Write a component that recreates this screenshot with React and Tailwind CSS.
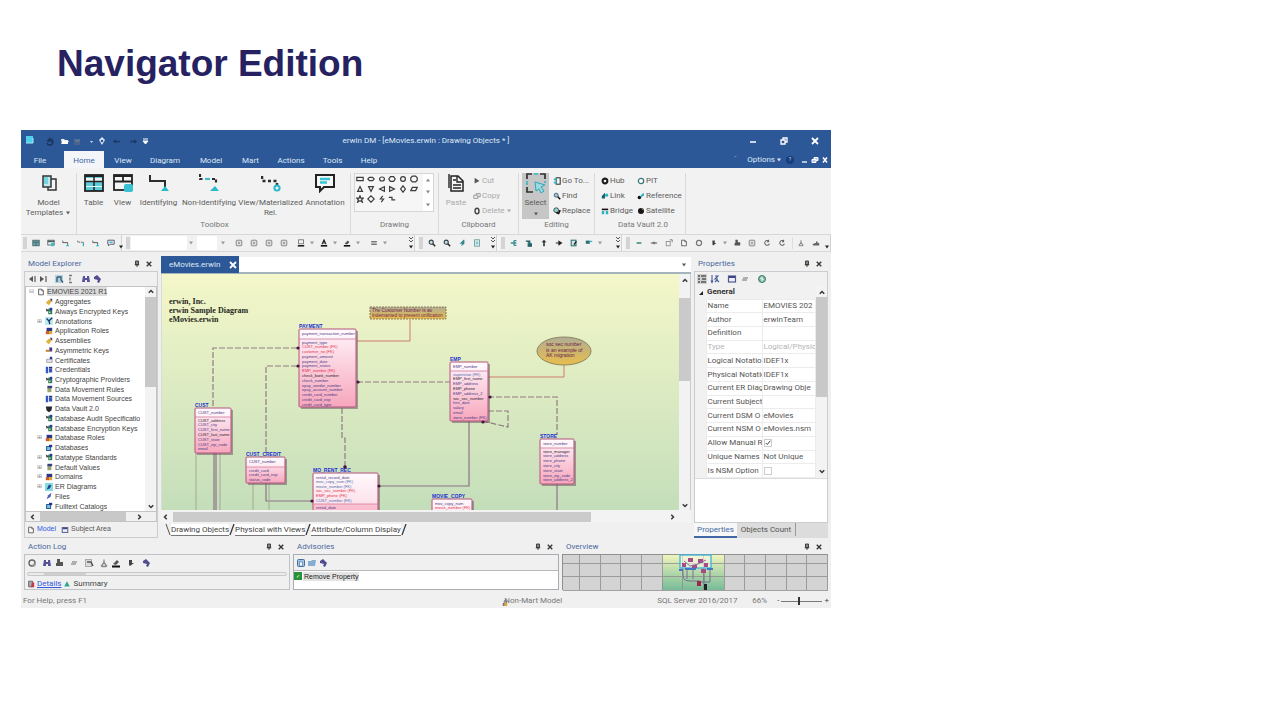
import { useState } from "react";

const DARK = "#3d3f45";
const TEAL = "#2bb3c0";

// small 10x10 toolbar glyphs
const glyphs = {
    table: <><rect x="1" y="1.5" width="8" height="7" fill="#5fa8ae" stroke="#4a5a60" /><path d="M1 4h8M5 4v4.5" stroke="#4a5a60" /></>,
    view: <><rect x="1" y="1.5" width="8" height="6" fill="#e8f4f4" stroke="#4a5a60" /><path d="M1 3h8" stroke="#4a5a60" strokeWidth="2" /><rect x="5" y="5" width="4" height="4" fill="#4bb6bd" /></>,
    rel: <><path d="M1 2v2.500h6V7" stroke={DARK} fill="none" /><path d="M5 9l2-3 2 3z" fill={TEAL} /></>,
    relDash: <><path d="M1 2v2h7v2" stroke={DARK} fill="none" strokeDasharray="2 1" /><path d="M8 5v4" stroke={TEAL} strokeWidth="1.500" /></>,
    note: <><path d="M1 1.500h8v5H4l-2 2v-2H1z" fill="#eef" stroke={DARK} /><path d="M3 4h4" stroke={TEAL} strokeWidth="1.500" /></>,
    box: <><rect x="1.500" y="1.500" width="7" height="7" rx="1" fill="#ddd" stroke="#777" /><rect x="4" y="4" width="2" height="2" fill="#888" /></>,
    boxLine: <><rect x="2" y="1" width="6" height="5" fill="none" stroke="#666" /><path d="M1 8.500h8" stroke="#222" strokeWidth="2" /></>,
    fontColor: <><path d="M2.500 6.500L5 1l2.500 5.500M3.500 5h3" stroke="#222" strokeWidth="1.300" fill="none" /><path d="M1 8.500h8" stroke="#111" strokeWidth="2" /></>,
    fill: <><path d="M2 6l4-4 2 2-3 3z" fill="#555" /><path d="M1 8.500h8" stroke="#111" strokeWidth="2" /></>,
    lines: <path d="M1.500 3.500h7M1.500 6.500h7" stroke="#777" strokeWidth="2" />,
    search: <><circle cx="4" cy="4" r="2.600" fill="#bfe3e3" stroke={DARK} strokeWidth="1.300" /><path d="M6 6l3 3" stroke="#222" strokeWidth="1.800" /></>,
    flag: <path d="M7 1L2 6h3l-1 3 4-3V1z" fill="#35878c" />,
    sheet: <><rect x="2" y="1" width="6" height="8" fill="#dcefee" stroke="#67908f" /><path d="M3.500 4h3M3.500 6h3" stroke={TEAL} /></>,
    tree: <path d="M1 5h4M5 2v6M5 2h3M5 5h3M5 8h3" stroke="#3b8d92" strokeWidth="1.600" fill="none" />,
    outline: <path d="M1 2h2M1 5h2M1 8h2M4 2h5M5 5h4M4 8h5" stroke="#555" strokeWidth="1.400" />,
    hook: <path d="M1 2.500h5V6M4 6h4v3H4z" stroke="#27636a" strokeWidth="1.500" fill="#27636a" />,
    up: <path d="M5 1l3 3H6v5H4V4H2z" fill="#333" />,
    arrow: <path d="M1 5h6M5 3l3 2-3 2z" stroke="#222" strokeWidth="1.500" />,
    export: <><rect x="1.500" y="1.500" width="6" height="7" fill="#cfe8e8" stroke="#2f6f70" strokeWidth="1.300" /><path d="M5 7l3-4" stroke="#111" strokeWidth="1.500" /></>,
    flow: <><rect x="1" y="2" width="5" height="4" fill="#2b7077" /><path d="M6 3h3" stroke={TEAL} strokeWidth="1.500" /></>,
    dash: <path d="M2 5h6" stroke="#448a80" strokeWidth="2" />,
    link: <><path d="M1 5h8" stroke="#777" strokeWidth="1.500" /><rect x="3.500" y="3.500" width="3" height="3" fill="#777" /></>,
    corner: <><rect x="1.500" y="3" width="5" height="5.500" fill="none" stroke="#888" /><path d="M6 1h3v3" stroke="#666" fill="none" /></>,
    page: <path d="M2 1.500h4l2 2v5H2zM6 1.500v2h2" stroke="#666" fill="#f7f7f7" strokeWidth="1.200" />,
    ring: <circle cx="5" cy="5" r="3.200" stroke="#777" strokeWidth="1.500" fill="none" />,
    square: <path d="M3 2h3v3h2L4 8 3 7z" fill="#444" />,
    stamp: <path d="M3 1h3v3h3v4H2V5h1z" fill="#555" />,
    rotate: <path d="M7 2.500A3 3 0 108 6M7 1v2.500H5" stroke="#666" strokeWidth="1.300" fill="none" />,
    person: <path d="M5 1.500v3M5 4.500L2 8.500M5 4.500l3 4M3 8.500h4" stroke="#888" strokeWidth="1.300" fill="none" />,
    chart: <path d="M1 8V6h2V5h2V3h2v2h2v3z" fill="#666" />,
    sortL: <><path d="M6 2L2 5l4 3z" fill="#555" /><path d="M8 2v6" stroke="#777" strokeWidth="1.500" /></>,
    sortR: <><path d="M2 2l4 3-4 3z" fill="#555" /><path d="M8 2v6" stroke="#777" strokeWidth="1.500" /></>,
    filter: <><rect x="1" y="1" width="8" height="8" fill="#b5cfdd" /><path d="M3 3h4v3l2 2.500M3 3v5" stroke="#34607e" strokeWidth="1.400" fill="none" /></>,
    filterGray: <><rect x="1.500" y="1.500" width="6" height="7" fill="#ddd" stroke="#aaa" /><path d="M3 4h4l2 4" stroke="#555" strokeWidth="1.500" fill="none" /></>,
    list: <path d="M4 1.500h3M5 3.500v3M4 8.500h3" stroke="#777" strokeWidth="1.400" />,
    bino: <path d="M2 2h2v2h2V2h2l1 6H6V6H4v2H1z" fill="#55529a" />,
    gem: <path d="M2 3l3-2 4 4-2 4-2-1 1-2-4-1z" fill="#504c8d" />,
    globe: <><circle cx="5" cy="5" r="3.500" fill="#7fb8a2" stroke="#3f7a66" /><path d="M5 2.500v5M3 4l4 2" stroke="#e9f6f0" /></>,
    gear: <><circle cx="5" cy="5" r="3" fill="#eee" stroke="#666" strokeWidth="1.400" /><circle cx="7" cy="7" r="1.500" fill="#999" /></>,
    mini: <><rect x="1.500" y="2" width="7" height="6" fill="#eceffa" stroke="#53588c" strokeWidth="1.200" /><path d="M2 3h6" stroke="#3f4586" strokeWidth="2" /></>,
    minus: <path d="M2 6h5M3 4h5" stroke="#999" strokeWidth="1.400" />,
    az: <path d="M2 1v7M1 6.500l1 2 1-2M5 2h3L5 5h3M5 8l2-2 2 2" stroke="#445a9c" strokeWidth="1.100" fill="none" />,
    disk: <><rect x="1.500" y="1.500" width="7" height="7" rx="1" fill="#9ec4e6" stroke="#456e9c" /><rect x="3.500" y="4" width="3" height="4" fill="#fff" stroke="#456e9c" strokeWidth=".6" /></>,
    folder: <path d="M1 3h3l1-1h4L8 8H1z" fill="#86aed0" />,
    tri: <path d="M5 1.500L8.500 8h-7z" fill="#2aa88f" />,
    book: <><path d="M2 1.500h5v7H2z" fill="#a9a9b8" stroke="#555" /><path d="M6 3h3v6H5z" fill="#c8384a" /></>,
};

function Glyph({ name, className = "size-2.5" }) {
    return <svg viewBox="0 0 10 10" className={"shrink-0 " + className} aria-hidden="true">{glyphs[name]}</svg>;
}

function Caret({ className = "" }) {
    return <svg viewBox="0 0 6 4" className={"h-1 w-1.5 shrink-0 " + className} aria-hidden="true"><path d="M1 .5h4L3 3.500z" fill="currentColor" /></svg>;
}

function Chevron({ dir }) {
    const d = { up: "M1 5l3-3 3 3", down: "M1 3l3 3 3-3", left: "M5 1L2 4l3 3", right: "M3 1l3 3-3 3" }[dir];
    return <svg viewBox="0 0 8 8" className="size-1.5 shrink-0" aria-hidden="true"><path d={d} fill="none" stroke="#3a3a3a" strokeWidth="2" /></svg>;
}

function CloseIcon({ className = "size-1.5" }) {
    return <svg viewBox="0 0 8 8" className={className} aria-hidden="true"><path d="M1 1l6 6M7 1L1 7" stroke="currentColor" strokeWidth="1.800" /></svg>;
}

function PanelTitle({ children }) {
    return (
        <div className="flex h-[14px] items-center pl-1 pr-1.5 text-[#4a689e]">
            <h2 className="flex-1 text-[8px]">{children}</h2>
            <button type="button" aria-label="Pin" className="mr-1.5 text-[#333]">
                <svg viewBox="0 0 8 10" className="h-2 w-1.5"><path d="M2 1h4v5H2zM1 6h6M4 6v3" fill="#888" stroke="currentColor" strokeWidth="1.200" /></svg>
            </button>
            <button type="button" aria-label="Close panel" className="text-[#333]"><CloseIcon /></button>
        </div>
    );
}

/* ---------- title bar + menu ---------- */

const menus = [
    ["File", "w-[38px]"], ["Home", "w-[40px]"], ["View", "w-[38px]"], ["Diagram", "w-[46px]"], ["Model", "w-[46px]"],
    ["Mart", "w-[33px]"], ["Actions", "w-[48px]"], ["Tools", "w-[35px]"], ["Help", "w-[38px]"],
];

function TitleBar() {
    const [active, setActive] = useState("Home");
    return (
        <header className="bg-[#2c5898] text-[#dfe8f5]">
            <div className="grid h-[21px] grid-cols-[1fr_auto_1fr] items-center">
                <svg viewBox="0 0 130 12" className="ml-1 h-3 w-[130px]" aria-hidden="true">
                    <rect x="1" y="1" width="7" height="7" fill="#4fd0ea" /><path d="M1 8h7V3" stroke="#a7ecf7" fill="none" />
                    <path d="M25 4a3 3 0 11-3 4M25 3l-2 3h4" stroke="#17365f" strokeWidth="1.500" fill="none" />
                    <path d="M36 4h3l1 1h3v4h-6z" fill="#f3f3ee" /><path d="M36 9l2-3h6l-2 3z" fill="#fff" />
                    <rect x="49" y="4" width="6" height="6" fill="#4c658e" /><path d="M51 4v2h3V4" stroke="#6d83a5" fill="none" />
                    <path d="M65 6h3l-1.500 2z" fill="#cfdcf0" />
                    <path d="M77 2l3 3-3 5-3-5z" fill="#dce6f4" /><circle cx="77" cy="6" r="1.300" fill="#2c5898" />
                    <path d="M89 6.500h6M91 5l-2 1.500 2 1.500M105 6.500h6M109 5l2 1.500-2 1.500" stroke="#1b3a68" strokeWidth="1.500" fill="none" />
                    <path d="M118 4h5M118 6h5l-2.500 3z" stroke="#fff" fill="#fff" />
                </svg>
                <h1 className="text-[8px] whitespace-nowrap">erwin DM - [eMovies.erwin : Drawing Objects * ]</h1>
                <div className="flex items-center justify-end gap-[23px] pr-3 text-white">
                    <button type="button" aria-label="Minimize"><svg viewBox="0 0 8 8" className="size-2"><path d="M1 5h6" stroke="currentColor" strokeWidth="1.500" /></svg></button>
                    <button type="button" aria-label="Restore"><svg viewBox="0 0 8 8" className="size-2"><path d="M1 3h4v4H1zM3 3V1h4v4H5" fill="none" stroke="currentColor" strokeWidth="1.300" /></svg></button>
                    <button type="button" aria-label="Close"><CloseIcon className="size-2" /></button>
                </div>
            </div>
            <nav className="flex h-[17px] items-stretch text-[8px]">
                {menus.map(([name, width]) => (
                    <button
                        key={name}
                        type="button"
                        onClick={() => setActive(name)}
                        className={`pt-0.5 ${width} ${name === "Home" ? "ml-[5px]" : ""} ${active === name ? "bg-[#f3f5f8] text-[#3f66a3]" : ""}`}
                    >
                        {name}
                    </button>
                ))}
                <div className="ml-auto flex items-center gap-1 pr-[3px]">
                    <span className="mr-1.5 text-[#8fabd4]">ˆ</span>
                    <button type="button" className="flex items-center">Options <Caret className="ml-px" /></button>
                    <span className="flex size-2 items-center justify-center rounded-full bg-[#163f7c] text-[5px]">?</span>
                    <svg viewBox="0 0 30 8" className="h-2 w-[30px]" aria-hidden="true">
                        <path d="M4 6h5" stroke="#fff" strokeWidth="1.300" /><path d="M14 3.500h4v3h-4zM16 3V1.500h4v3h-2" fill="#b9cbe6" stroke="#fff" />
                        <path d="M25 1.500l4 5M29 1.500l-4 5" stroke="#fff" strokeWidth="1.500" />
                    </svg>
                </div>
            </nav>
        </header>
    );
}

/* ---------- ribbon ---------- */

const bigIcons = {
    templates: <><rect x="9" y="6" width="8" height="11" fill="#f4f4f4" stroke="#333" strokeWidth="1.500" /><rect x="4" y="3" width="8" height="11" fill="#bfe9ee" stroke="#333" strokeWidth="1.500" /><rect x="5" y="4" width="4" height="7" fill="#74d4df" /></>,
    table: <><rect x="1" y="2" width="18" height="16" fill="#5fcbd8" stroke="#222" strokeWidth="1.800" /><path d="M2 6.500h16" stroke="#f2f2f2" strokeWidth="3" /><path d="M1 3h18" stroke="#222" strokeWidth="2" /><path d="M10 3v15M1 8.500h18" stroke="#222" strokeWidth="1.500" /><path d="M2 13.500h16" stroke="#e4fbfd" /></>,
    view: <><rect x="1" y="2" width="18" height="15" fill="#f5f5f5" stroke="#222" strokeWidth="1.800" /><path d="M1 3h18M10 3v6M1 8.500h18" stroke="#222" strokeWidth="1.800" /><rect x="11" y="11" width="9" height="8" rx="2" fill="#37c1d2" /></>,
    identifying: <><path d="M1 2v6h15v6" fill="none" stroke="#2d2d2d" strokeWidth="2" /><path d="M12 18l4-5 4 5z" fill="#28b9cb" /></>,
    nonident: <><path d="M1 1v5h3M13 6h4v5" fill="none" stroke="#2d2d2d" strokeWidth="2.200" strokeDasharray="3 1.500" /><path d="M6 6h5" stroke="#41bfcc" strokeWidth="2.200" /><path d="M11 18l5-5 4 5z" fill="#28b9cb" /></>,
    material: <><path d="M1 3v5h15v4" fill="none" stroke="#2d2d2d" strokeWidth="2.500" strokeDasharray="3 2.500" /><circle cx="16" cy="15" r="2.600" fill="none" stroke="#28b9cb" strokeWidth="2" /></>,
    annotation: <><path d="M1 2h18v12H9l-4 4v-4H1z" fill="#f8f8f8" stroke="#222" strokeWidth="2" /><path d="M5 6h10M5 9.500h7" stroke="#3bc4d3" strokeWidth="2.500" /></>,
    paste: <><path d="M5 3h7l5 5v10H5z" fill="#f5f5f5" stroke="#222" strokeWidth="1.500" /><path d="M3 1v14M11 3v6h6M7 12h8M7 15h8M7 7h3" stroke="#222" strokeWidth="1.400" fill="none" /></>,
    select: <><path d="M1 6V1h5M14 1h5v5M1 14v5h6" fill="none" stroke="#333" strokeWidth="1.700" /><path d="M8 1h4M1 8v4M19 8v2" stroke="#38b8c5" strokeWidth="1.700" /><path d="M9 9l10 3-4 2 3 4-3 2-2-4-3 2z" fill="#9fd8de" stroke="#29aab9" /></>,
};

function BigIcon({ name, className = "size-5" }) {
    return <svg viewBox="0 0 20 20" className={className} aria-hidden="true">{bigIcons[name]}</svg>;
}

function RibbonButton({ icon, label, width, children }) {
    return (
        <button type="button" className={`flex flex-col items-center ${width}`}>
            <BigIcon name={icon} />
            <span className="mt-[5px] text-center leading-[10px] whitespace-nowrap">{label}{children}</span>
        </button>
    );
}

function RibbonGroup({ label, width, children }) {
    return (
        <section className={`flex shrink-0 flex-col border-r border-[#d9d9d9] ${width}`}>
            <div className="flex h-[46px] items-start">{children}</div>
            <h3 className="text-center leading-[12px] text-[#777]">{label}</h3>
        </section>
    );
}

function SmallCommand({ icon, children }) {
    return (
        <button type="button" className="flex h-[15px] items-center gap-px whitespace-nowrap">
            <svg viewBox="0 0 10 10" className="size-2 shrink-0" aria-hidden="true">{icon}</svg>
            {children}
        </button>
    );
}

const shapes = [
    "M1 3h8v4H1z", "M3 3h4l2 2-2 2H3L1 5z", "M2 5a3 2.500 0 016 0 3 2.500 0 01-6 0", "M3 2h4l2 3-2 3H3L1 5z", "M2 5a3 3 0 016 0 3 3 0 01-6 0", "M3 1.500h4l2 2v3l-2 2H3l-2-2v-3z",
    "M5 2l3 6H2z", "M2 2h6L5 8z", "M8 2v6L2 5z", "M2 2l6 3-6 3z", "M5 1l3 4-3 4-3-4z", "M3 3h6L7 7H1z",
    "M5 1l1 3h3L7 6l1 3-3-2-3 2 1-3-2-2h3z", "M5 1l2 2 2 2-2 2-2 2-2-2-2-2 2-2z", "M6 1L3 5h4L4 9", "M1 3h4v3h4",
];

function Ribbon() {
    return (
        <div className="flex h-[66px] overflow-hidden bg-[#f2f2f2] pt-[5px] text-[8px] text-[#5c5c5c]">
            <RibbonGroup width="w-[56px]">
                <RibbonButton icon="templates" width="w-full" label={<>Model<br />Templates </>}><Caret className="inline-block" /></RibbonButton>
            </RibbonGroup>
            <RibbonGroup label="Toolbox" width="w-[274px] pl-0.5">
                <RibbonButton icon="table" label="Table" width="w-[29px]" />
                <RibbonButton icon="view" label="View" width="w-[29px]" />
                <RibbonButton icon="identifying" label="Identifying" width="w-[43px]" />
                <RibbonButton icon="nonident" label="Non-Identifying" width="w-[58px]" />
                <RibbonButton icon="material" label={<>View/Materialized<br />Rel.</>} width="w-[65px]" />
                <RibbonButton icon="annotation" label="Annotation" width="w-[44px]" />
            </RibbonGroup>
            <RibbonGroup label="Drawing" width="w-[88px]">
                <div className="ml-[3px] flex h-[39px] w-[80px] border border-[#d5d5d5] bg-[#f6f6f6]">
                    <div className="grid w-[68px] grid-cols-6 content-start gap-y-0.5 pr-1 pt-px">
                        {shapes.map((d) => (
                            <svg key={d} viewBox="0 0 10 10" className="mx-auto size-2" aria-hidden="true"><path d={d} fill="none" stroke="#3c3c3c" strokeWidth="1.500" /></svg>
                        ))}
                    </div>
                    <div className="flex flex-1 flex-col items-center justify-around bg-white text-[#888]">
                        <Caret className="rotate-180" /><Caret /><Caret />
                    </div>
                </div>
            </RibbonGroup>
            <RibbonGroup label="Clipboard" width="w-[80px]">
                <button type="button" className="flex w-[34px] flex-col items-center text-[#aaa]"><BigIcon name="paste" /><span className="mt-[5px] leading-[10px]">Paste</span></button>
                <div className="text-[#aaa]">
                    <SmallCommand icon={<path d="M2 1l6 4-6 3z" fill="#555" />}>Cut</SmallCommand>
                    <SmallCommand icon={<path d="M1 4h5v4H1zM4 4V2h5v4H6" fill="none" stroke="#888" />}>Copy</SmallCommand>
                    <SmallCommand icon={<ellipse cx="5" cy="5" rx="2.500" ry="3.500" fill="none" stroke="#444" strokeWidth="1.800" />}>Delete <Caret /></SmallCommand>
                </div>
            </RibbonGroup>
            <RibbonGroup label="Editing" width="w-[76px]">
                <button type="button" className="mr-1 ml-[3px] flex h-[46px] w-[27px] flex-col items-center bg-[#c6c6c6]">
                    <BigIcon name="select" /><span className="mt-[5px] leading-[10px]">Select</span><Caret className="mt-1" />
                </button>
                <div>
                    <SmallCommand icon={<><rect x="4" y="1" width="5" height="8" fill="none" stroke="#333" strokeWidth="1.300" /><path d="M1 3h4M1 7h4" stroke={TEAL} strokeWidth="2" /></>}>Go To...</SmallCommand>
                    <SmallCommand icon={<><circle cx="4" cy="4" r="2.500" fill="#8fcfd5" stroke="#446" /><path d="M6 6l3 3" stroke="#111" strokeWidth="2" /></>}>Find</SmallCommand>
                    <SmallCommand icon={<><circle cx="4" cy="4" r="3" fill="#8fd5d8" stroke="#333" /><path d="M4 7l3 1 2-4" stroke="#111" strokeWidth="2" fill="none" /></>}>Replace</SmallCommand>
                </div>
            </RibbonGroup>
            <RibbonGroup label="Data Vault 2.0" width="w-[91px] pl-1.5">
                <div className="w-[36px]">
                    <SmallCommand icon={<circle cx="5" cy="5" r="3" fill="none" stroke="#1a1a1a" strokeWidth="2.600" />}>Hub</SmallCommand>
                    <SmallCommand icon={<><path d="M1 8V5l4-4v7z" fill="#1f5f68" /><circle cx="7" cy="4" r="2" fill={TEAL} /></>}>Link</SmallCommand>
                    <SmallCommand icon={<><path d="M1 2h8v2H1z" fill="#111" /><path d="M1 5h3v4H1zM6 5h3v4H6z" fill={TEAL} /></>}>Bridge</SmallCommand>
                </div>
                <div>
                    <SmallCommand icon={<circle cx="5" cy="5" r="3.300" fill="#fff" stroke="#3c7a78" strokeWidth="1.600" />}>PIT</SmallCommand>
                    <SmallCommand icon={<><circle cx="3" cy="7" r="2.200" fill="#111" /><path d="M4 5l4-4 1 3-4 3z" fill={TEAL} /></>}>Reference</SmallCommand>
                    <SmallCommand icon={<><circle cx="5" cy="5" r="3.800" fill="#161616" /><path d="M6 2l2 2" stroke="#bbb" /></>}>Satellite</SmallCommand>
                </div>
            </RibbonGroup>
        </div>
    );
}

/* ---------- toolbar strip ---------- */

function Tool({ name }) {
    return <button type="button" aria-label={name} className="flex w-[15px] shrink-0 justify-center"><Glyph name={name} className="size-2" /></button>;
}

function Drop() {
    return <span className="flex w-2 shrink-0 justify-center text-[#999]"><Caret /></span>;
}

function Strip({ width, chevron, children }) {
    return (
        <div className={`flex items-center border-r border-[#d2d2d2] bg-[#f1f1f1] ${width}`}>
            <span className="mx-px h-3 w-1 shrink-0 bg-[#d4d4d4]" />
            {children}
            <span className="ml-auto flex h-full flex-col items-center justify-end gap-0.5 pb-0.5 text-[#222]">
                {chevron && <svg viewBox="0 0 6 6" className="size-1.5" aria-hidden="true"><path d="M1 0l2 2 2-2M1 3l2 2 2-2" fill="none" stroke="#555" /></svg>}
                <Caret />
            </span>
        </div>
    );
}

function Toolbar() {
    return (
        <div className="flex h-[18px] gap-[3px] overflow-hidden border-y border-[#d8d8d8] bg-[#f5f5f5] pl-px">
            <Strip width="w-[100px]">
                {["table", "view", "rel", "relDash", "rel", "note"].map((n, i) => <Tool key={i} name={n} />)}
            </Strip>
            <Strip width="w-[290px]" chevron>
                <input aria-label="Font" className="h-3.5 w-[56px] bg-white" />
                <Drop />
                <input aria-label="Font size" className="mx-0.5 h-3.5 w-[20px] bg-white" />
                <Drop />
                <span className="w-1" />
                {[1, 2, 3, 4].map((n) => <Tool key={n} name="box" />)}
                <span className="w-0.5" />
                <Tool name="boxLine" /><Drop />
                <Tool name="fontColor" /><Drop />
                <Tool name="fill" /><Drop />
                <span className="w-1" />
                <Tool name="lines" /><Drop />
            </Strip>
            <Strip width="w-[79px]" chevron>
                {["search", "search", "flag", "sheet"].map((n, i) => <Tool key={i} name={n} />)}
            </Strip>
            <Strip width="w-[122px]" chevron>
                {["tree", "hook", "up", "arrow", "export", "flow"].map((n) => <Tool key={n} name={n} />)}
                <Drop />
            </Strip>
            <Strip width="flex-1">
                {["dash", "link", "corner", "page", "ring", "square"].map((n) => <Tool key={n} name={n} />)}
                <Drop />
                {["stamp", "box", "rotate", "rotate"].map((n, i) => <Tool key={i} name={n} />)}
                <span className="h-3 w-1 border-r border-[#ddd]" />
                <Tool name="person" /><Tool name="chart" />
            </Strip>
        </div>
    );
}

/* ---------- model explorer ---------- */

const treeIcons = {
    tag: <><path d="M1 6l4-4 4 1-4 6z" fill="#e2b13c" /><path d="M6 1h3v4z" fill="#34407e" /></>,
    key: <><path d="M4 2h5v7H4z" fill="#2f7a58" /><path d="M1 2l4 2-3 2z" fill="#333" /><path d="M6 1h3v3H6z" fill="#2738a6" /><circle cx="6" cy="6.500" r="1" fill="#d7f0e2" /></>,
    note: <><rect width="10" height="10" fill="#b9eef0" /><path d="M2 2l3 3 1 4M5 5l4-4" stroke="#26346e" strokeWidth="1.800" fill="none" /></>,
    role: <><path d="M2 1h7v4H2z" fill="#2c378a" /><path d="M1 5h4v4H1z" fill="#cf5b35" /><path d="M5 5h4v4H5z" fill="#d9a936" /></>,
    asym: <><path d="M1 6h5" stroke="#cf7d30" strokeWidth="2.500" /><path d="M5 2h4v5H6z" fill="#3a3e91" /></>,
    cert: <><path d="M2 4h7v4H2z" fill="#e1e3ee" stroke="#999" /><path d="M6 1h3v3H6z" fill="#2a3595" /></>,
    cred: <><path d="M1 1h3v8H1zM5 3h4v5H5z" fill="#3557bf" /><path d="M5 1h4v2H5z" fill="#1d2b83" /></>,
    rule: <><path d="M3 3h5v6H3z" fill="#9aa36d" /><path d="M3 1h6v3H3z" fill="#344083" /></>,
    vault: <path d="M1 2h8L8 7 5 9 2 7z" fill="#26262e" />,
    db: <><path d="M2 3h5v5H2z" fill="#7dc3e1" stroke="#245c98" strokeWidth="1.300" /><path d="M5 1h4v3H5z" fill="#23348f" /></>,
    er: <><rect width="10" height="10" fill="#83dce4" /><path d="M2 8l3-6 3 1-2 4z" fill="#224589" /></>,
    file: <path d="M2 9l2-5 4-3-1 5z" fill="#4d5eb1" />,
};

const tree = [
    ["Aggregates", "tag"], ["Always Encrypted Keys", "key"], ["Annotations", "note", true], ["Application Roles", "role"], ["Assemblies", "tag"],
    ["Asymmetric Keys", "asym"], ["Certificates", "cert"], ["Credentials", "cred"], ["Cryptographic Providers", "key"],
    ["Data Movement Rules", "rule"], ["Data Movement Sources", "cred"], ["Data Vault 2.0", "vault"], ["Database Audit Specificatio", "key"],
    ["Database Encryption Keys", "key"], ["Database Roles", "role", true], ["Databases", "db"], ["Datatype Standards", "key", true],
    ["Default Values", "rule", true], ["Domains", "role", true], ["ER Diagrams", "er", true], ["Files", "file"], ["Fulltext Catalogs", "db"],
];

function ModelExplorer() {
    return (
        <aside className="flex min-w-0 flex-col">
            <PanelTitle>Model Explorer</PanelTitle>
            <div className="flex flex-1 flex-col border border-[#c9ccd1]">
                <div className="flex h-[14px] items-center gap-px pl-0.5">
                    <Glyph name="sortL" /><Glyph name="sortR" />
                    <span className="w-1" />
                    <Glyph name="filter" /><Glyph name="list" />
                    <span className="w-1" />
                    <Glyph name="bino" /><Glyph name="gem" />
                </div>
                <div className="flex border border-[#c4c4c4] bg-white">
                    <ul className="grid h-[224px] min-w-0 flex-1 auto-rows-fr overflow-hidden font-['Liberation_Sans',sans-serif] text-[7px] leading-[9px] text-[#444]">
                        <li className="flex items-center gap-0.5 pl-[3px]">
                            <span className="w-1.5 text-[6px] text-[#888]">⊟</span>
                            <Glyph name="page" className="size-2" />
                            <span className="bg-[#dcdcdc] whitespace-nowrap">EMOVIES 2021 R1</span>
                        </li>
                        {tree.map(([name, icon, open]) => (
                            <li key={name} className="flex items-center gap-0.5 pl-[11px]">
                                <span className="w-1.5 text-[6px] text-[#888]">{open ? "⊞" : ""}</span>
                                <svg viewBox="0 0 10 10" className="size-2 shrink-0" aria-hidden="true">{treeIcons[icon]}</svg>
                                <span className="overflow-hidden whitespace-nowrap">{name}</span>
                            </li>
                        ))}
                    </ul>
                    <div className="flex w-[11px] flex-col items-center bg-[#f3f3f3] py-0.5">
                        <Chevron dir="up" />
                        <span className="mt-0.5 h-[90px] w-full bg-[#c8c8c8]" />
                        <span className="flex-1" />
                        <Chevron dir="down" />
                    </div>
                </div>
                <div className="flex h-[10px] items-center border-x border-b border-[#c4c4c4] bg-[#f0f0f0] px-1">
                    <Chevron dir="left" />
                    <span className="ml-1 h-full w-[86px] bg-[#c8c8c8]" />
                    <span className="flex-1" />
                    <Chevron dir="right" />
                    <span className="w-2.5" />
                </div>
                <div className="flex flex-1 items-center gap-0.5 pl-0.5 font-['Liberation_Sans',sans-serif] text-[7px] text-[#555]">
                    <Glyph name="page" className="size-2" />
                    <button type="button" className="mr-px text-[#3159e0]">Model</button>
                    <Glyph name="mini" className="ml-0.5 size-2" />
                    <button type="button">Subject Area</button>
                </div>
            </div>
        </aside>
    );
}

/* ---------- diagram canvas ---------- */

const N = "#4b3a86";
const K = "#2a1f33";
const R = "#e6304a";
const B = "#4a6fb0";

const entities = [
    {
        name: "PAYMENT", x: 137, y: 55, w: 57, h: 78, split: 10,
        keys: [["payment_transaction_number", N]],
        cols: [["payment_type", N], ["CUST_number (FK)", R], ["customer_no (FK)", R], ["payment_amount", N], ["payment_date", N], ["payment_status", N], ["EMP_number (FK)", R],
            ["check_bank_number", K], ["check_number", N], ["epay_vendor_number", N], ["epay_account_number", N], ["credit_card_number", N], ["credit_card_exp", N], ["credit_card_type", N]],
    },
    {
        name: "CUST", x: 33, y: 134, w: 36, h: 45, split: 9,
        keys: [["CUST_number", N]],
        cols: [["CUST_address", K], ["CUST_city", N], ["CUST_first_name", N], ["CUST_last_name", K], ["CUST_state", N], ["CUST_zip_code", N], ["email", N]],
    },
    {
        name: "CUST_CREDIT", x: 84, y: 183, w: 39, h: 26, split: 10,
        keys: [["CUST_number", N]],
        cols: [["credit_card", N], ["credit_card_exp", N], ["status_code", N]],
    },
    {
        name: "MO_RENT_REC", x: 151, y: 199, w: 65, h: 50, split: 31,
        keys: [["rental_record_date", N], ["mov_copy_num (FK)", B], ["movie_number (FK)", B], ["soc_sec_number (FK)", R], ["EMP_phone (FK)", R], ["CUST_number (FK)", B]],
        cols: [["rental_date", N]],
    },
    {
        name: "EMP", x: 288, y: 88, w: 38, h: 59, split: 9,
        keys: [["EMP_number", N]],
        cols: [["supervisor (FK)", B], ["EMP_first_name", K], ["EMP_address", N], ["EMP_phone", K], ["EMP_address_2", N], ["soc_sec_number", K], ["hire_date", N], ["salary", N], ["email", N], ["store_number (FK)", N]],
    },
    {
        name: "STORE", x: 378, y: 165, w: 34, h: 45, split: 9,
        keys: [["store_number", N]],
        cols: [["store_manager", K], ["store_address", N], ["store_phone", N], ["store_city", N], ["store_state", N], ["store_zip_code", N], ["store_address_2", N]],
    },
    {
        name: "MOVIE_COPY", x: 270, y: 225, w: 40, h: 30, split: 24,
        keys: [["mov_copy_num", N], ["movie_number (FK)", R]],
        cols: [],
    },
];

function Entity({ name, x, y, w, h, split, keys, cols }) {
    const pitch = Math.min(4.8, (h - split - 1) / Math.max(cols.length, 1));
    return (
        <g>
            <rect x={x + 2} y={y + 2} width={w} height={h} fill="#6d5a63" opacity=".55" />
            <rect x={x} y={y} width={w} height={h} rx="1" fill="url(#pink)" stroke="#b4557f" />
            <rect x={x + 1} y={y + 1} width={w - 2} height={split - 1} fill="#fff" opacity=".5" />
            <path d={`M${x} ${y + split}h${w}`} stroke="#d07a9c" strokeWidth=".8" />
            <text x={x} y={y - 1} fontSize="5" fontWeight="bold" fill="#1f2fd0">{name}</text>
            {keys.map(([t, c], i) => <text key={t} x={x + 3} y={y + 5.5 + i * 4.6} fill={c}>{t}</text>)}
            {cols.map(([t, c], i) => <text key={t} x={x + 3} y={y + split + 4.5 + i * pitch} fill={c}>{t}</text>)}
        </g>
    );
}

function Diagram() {
    return (
        <svg width="518" height="236" viewBox="0 0 518 236" className="block font-['Liberation_Sans',sans-serif] text-[4px]" fill="currentColor" role="img" aria-label="eMovies diagram">
            <defs>
                <linearGradient id="pink" x1="0" y1="0" x2="0" y2="1"><stop offset="0" stopColor="#fff4fa" /><stop offset="1" stopColor="#f7a6bc" /></linearGradient>
                <linearGradient id="gold" x1="0" y1="0" x2="0" y2="1"><stop offset="0" stopColor="#b0ad96" /><stop offset="1" stopColor="#e8bd4c" /></linearGradient>
            </defs>
            <g className="font-['Liberation_Serif',serif]" fontSize="8" fontWeight="bold" fill="#26281c">
                <text x="7" y="30">erwin, Inc.</text>
                <text x="7" y="39">erwin Sample Diagram</text>
                <text x="7" y="48">eMovies.erwin</text>
            </g>
            <g fill="none" stroke="#937a86" strokeWidth="1.200" strokeDasharray="6 2">
                <path d="M51 132V74h86" /><path d="M104 179V92h33" /><path d="M195 108h93" /><path d="M180 134v30h3v29" />
                <path d="M326 123h69v38" /><path d="M326 137h20v16l-26-6" />
            </g>
            <g fill="none" stroke="#8d7486" strokeWidth="1.200">
                <path d="M307 147v65h-91" /><path d="M104 209v18h47" /><path d="M52 179v57M54 179v57M395 210v26" />
                <path d="M34 179v57M58 179v57M91 209v27M107 209v27" stroke="#a3a894" strokeWidth="1" />
            </g>
            <path d="M248 46v21h-53M402 91v12h-76" fill="none" stroke="#cd7d6c" />
            {entities.map((e) => <Entity key={e.name} {...e} />)}
            <g fill="#43153f">
                <circle cx="136" cy="74" r="1.600" /><circle cx="136" cy="92" r="1.600" /><circle cx="196" cy="108" r="1.600" /><circle cx="183" cy="193" r="1.800" />
                <circle cx="328" cy="123" r="1.600" /><circle cx="321" cy="148" r="1.600" /><circle cx="217" cy="212" r="1.600" /><circle cx="150" cy="227" r="1.600" />
            </g>
            <rect x="208" y="33" width="76" height="12" fill="url(#gold)" stroke="#8a7b55" strokeDasharray="2 1" />
            <g fill="#7a2348" fontSize="4.800">
                <text x="210" y="38">The Customer Number is as</text>
                <text x="210" y="43">indemanted to prevent unification</text>
            </g>
            <ellipse cx="402" cy="77" rx="27" ry="14" fill="url(#gold)" stroke="#8c8763" />
            <g fill="#6b2148" fontSize="5">
                <text x="384" y="72">soc sec number</text>
                <text x="384" y="78">is an example of</text>
                <text x="384" y="83">AK migration</text>
            </g>
        </svg>
    );
}

function SlantTab({ children, first }) {
    return (
        <button type="button" className="flex h-[12px] items-stretch">
            {first && <svg viewBox="0 0 6 12" className="w-1.5" aria-hidden="true"><path d="M1 0l4 11" stroke="#555" /></svg>}
            <span className="border-b border-[#777] bg-white leading-[12px] whitespace-nowrap">{children}</span>
            <svg viewBox="0 0 6 12" className="w-1.5" aria-hidden="true"><path d="M5 0L1 11" stroke="#333" strokeWidth="1.200" /></svg>
        </button>
    );
}

function Workspace() {
    return (
        <main className="flex min-w-0 flex-col">
            <div className="flex h-[17px] items-center justify-between border-b-2 border-[#a5b3bd] bg-white pr-1">
                <div className="flex h-[17px] w-[78px] items-center justify-between bg-[#2c5898] pr-0.5 pl-2 text-[8px] text-[#dfe8f5]">
                    eMovies.erwin
                    <button type="button" aria-label="Close tab" className="text-white"><CloseIcon className="size-2" /></button>
                </div>
                <span className="text-[#555]"><Caret /></span>
            </div>
            <div className="flex border-l border-[#d8dbd8]">
                <div className="min-w-0 flex-1 overflow-hidden bg-linear-to-b from-[#f4f7c9] to-[#c4deba]"><Diagram /></div>
                <div className="flex w-[12px] flex-col items-center border-r border-[#ccc] bg-[#f2f2f2] pt-1 pb-0.5">
                    <Chevron dir="up" />
                    <span className="mt-[14px] h-[83px] w-full bg-[#cacaca]" />
                    <span className="flex-1" />
                    <Chevron dir="down" />
                </div>
            </div>
            <div className="flex h-[13px] items-center bg-[#f3f3f3] pr-4 pl-0.5">
                <Chevron dir="left" />
                <span className="ml-1 h-2.5 w-[418px] bg-[#cbcbcb]" />
                <span className="flex-1" />
                <Chevron dir="right" />
            </div>
            <div className="flex h-[15px] pt-px pl-1 text-[8px] text-[#444]">
                <SlantTab first>Drawing Objects</SlantTab>
                <SlantTab>Physical with Views</SlantTab>
                <SlantTab>Attribute/Column Display</SlantTab>
            </div>
        </main>
    );
}

/* ---------- properties ---------- */

const properties = [
    ["Name", "EMOVIES 202"], ["Author", "erwinTeam"], ["Definition", ""], ["Type", "Logical/Physic"], ["Logical Notatio", "IDEF1x"],
    ["Physical Notatic", "IDEF1x"], ["Current ER Diag", "Drawing Obje"], ["Current Subject", ""], ["Current DSM O", "eMovies"],
    ["Current NSM O", "eMovies.nsm"], ["Allow Manual R", true], ["Unique Names", "Not Unique"], ["Is NSM Option", false],
];

function Properties() {
    return (
        <aside className="flex min-w-0 flex-col text-[8px]">
            <PanelTitle>Properties</PanelTitle>
            <div className="flex flex-1 flex-col border border-[#c9ccd1] bg-white">
                <div className="flex h-[14px] items-center gap-[3px] bg-[#f1f1f1] pl-0.5">
                    <span className="bg-[#cfcfcf]"><Glyph name="outline" /></span><Glyph name="az" />
                    <span className="w-px" />
                    <Glyph name="mini" /><Glyph name="minus" />
                    <span className="w-px" />
                    <Glyph name="globe" />
                </div>
                <div className="flex border-b border-[#ddd]">
                    <div className="min-w-0 flex-1">
                        <table className="h-[192px] w-full table-fixed border-collapse leading-[10px] text-[#555]">
                            <colgroup><col className="w-[11px]" /><col className="w-[56px]" /><col /></colgroup>
                            <tbody>
                                <tr className="bg-[#f1f1f1]">
                                    <td className="p-0"><svg viewBox="0 0 6 6" className="mx-auto size-1"><path d="M6 0v6H0z" fill="#222" /></svg></td>
                                    <th colSpan="2" className="p-0 pl-px text-left font-bold text-[#333]">General</th>
                                </tr>
                                {properties.map(([label, value]) => (
                                    <tr key={label} className={label === "Type" ? "text-[#b5b5b5]" : ""}>
                                        <td className="bg-[#f1f1f1] p-0" />
                                        <th className="overflow-hidden border border-[#ececec] p-0 pl-px text-left font-normal whitespace-nowrap">{label}</th>
                                        <td className="overflow-hidden border border-[#ececec] p-0 pl-px whitespace-nowrap">
                                            {typeof value === "boolean" ? (
                                                <label className="relative block size-2 border border-[#ccc]">
                                                    <input type="checkbox" aria-label={label} defaultChecked={value} className="peer absolute inset-0 size-full appearance-none" />
                                                    <svg viewBox="0 0 8 8" className="pointer-events-none invisible absolute inset-0 peer-checked:visible"><path d="M1 4l2 2 4-5" fill="none" stroke="#333" strokeWidth="1.200" /></svg>
                                                </label>
                                            ) : value}
                                        </td>
                                    </tr>
                                ))}
                            </tbody>
                        </table>
                    </div>
                    <div className="flex w-[11px] flex-col items-center bg-[#f3f3f3] py-1">
                        <Chevron dir="up" />
                        <span className="mt-px h-[100px] w-full bg-[#c8c8c8]" />
                        <span className="flex-1" />
                        <Chevron dir="down" />
                    </div>
                </div>
            </div>
            <div className="flex h-[15px] bg-[#dcdcdc]">
                <button type="button" className="w-[43px] border-b-2 border-[#3f68a4] bg-[#f7f7f7] text-[#3f68a4]">Properties</button>
                <button type="button" className="mb-0.5 w-[59px] border-r border-[#999] text-[#555]">Objects Count</button>
            </div>
        </aside>
    );
}

/* ---------- bottom panels ---------- */

function ActionLog() {
    return (
        <section className="min-w-0">
            <PanelTitle>Action Log</PanelTitle>
            <div className="flex h-[36px] flex-col border border-[#bfc2c6] text-[8px]">
                <div className="flex h-[15px] items-center gap-0.5 pl-0.5">
                    <Glyph name="gear" /><span className="w-px" /><Glyph name="bino" /><Glyph name="stamp" /><span className="w-px" /><Glyph name="minus" />
                    <span className="w-px" /><Glyph name="filterGray" /><span className="w-px" /><Glyph name="person" /><Glyph name="fill" />
                    <span className="w-px" /><Glyph name="square" /><span className="w-px" /><Glyph name="gem" />
                </div>
                <div className="mx-0.5 mt-0.5 h-1 rounded-sm border border-[#c8c8c8] bg-[#ececec]"><div className="ml-4 h-0.5 w-[42px] bg-[#cfcfcf]" /></div>
                <div className="mt-0.5 flex items-center gap-0.5 pl-0.5 leading-[11px]">
                    <Glyph name="book" className="size-2" />
                    <button type="button" className="text-[#3159e0] underline">Details</button>
                    <Glyph name="tri" className="size-2" />
                    <button type="button" className="text-[#444]">Summary</button>
                </div>
            </div>
        </section>
    );
}

function Advisories() {
    return (
        <section className="min-w-0">
            <PanelTitle>Advisories</PanelTitle>
            <div className="flex h-[36px] flex-col border border-[#a9acb0]">
                <div className="flex h-[16px] items-center gap-px border-b border-[#b9b9b9] pl-0.5"><Glyph name="disk" /><Glyph name="folder" /><Glyph name="gem" /></div>
                <div className="flex flex-1 items-start bg-white pt-px font-['Liberation_Sans',sans-serif] text-[7px] leading-[9px] text-[#222]">
                    <span className="mr-px flex size-2 items-center justify-center bg-[#27913a] text-[5px] text-white">✓</span>
                    <span className="bg-[#e4e4e4] px-px">Remove Property</span>
                </div>
            </div>
        </section>
    );
}

function Overview() {
    const cells = Array.from({ length: 39 }, (_, i) => i);
    return (
        <section className="min-w-0">
            <PanelTitle>Overview</PanelTitle>
            <div className="relative h-[36px] bg-[#d3d3d3]">
                <div className="absolute inset-y-0 left-[100px] w-[62px] bg-linear-to-b from-[#f3f6bd] to-[#76bb98]" />
                <div className="relative grid h-full grid-cols-[17px_repeat(12,minmax(0,1fr))] grid-rows-[9px_13px_14px] border-t border-l border-[#909090]">
                    {cells.map((i) => <span key={i} className="border-r border-b border-[#8d8d8d]/80" />)}
                </div>
                <svg viewBox="0 0 62 36" className="absolute top-0 left-[100px] h-[36px] w-[62px]" aria-hidden="true">
                    <rect x="18" y="1" width="31" height="13" fill="#f8f7e6" fillOpacity=".6" stroke="#3ab4dd" strokeWidth="1.300" />
                    <path d="M20 9h4v4h-4zM26 4h5v4h-5zM36 5h5v4h-5zM30 11h5v3h-5zM42 9h4v4h-4zM39 15h5v4h-5z" fill="#a64c86" />
                    <path d="M17 16h4M23 15h11M45 15h6" stroke="#4277c7" strokeWidth="2" fill="none" />
                    <path d="M22 7l6 5 8-2 8-4" stroke="#8d6aa0" fill="none" />
                    <path d="M21 15v7q0 5 7 5h10M25 15v10M31 15v10M42 19v11M48 16v12h-9" fill="none" stroke="#75728b" />
                    <path d="M35 27h4v5h-4z" fill="#9c294c" /><path d="M42 30h3v6h-3z" fill="#202126" />
                </svg>
            </div>
        </section>
    );
}

function StatusBar() {
    return (
        <footer className="flex h-[14px] items-center pr-[2px] pl-[2px] text-[8px] text-[#777]">
            <span className="flex-1">For Help, press F1</span>
            <svg viewBox="0 0 8 8" className="mt-1 -mr-1 size-1.5" aria-hidden="true"><path d="M1 4h3v4H1z" fill="#777" /><path d="M3 4h4v4H3z" fill="#d9a83a" /><path d="M3 4V1h3v3" fill="none" stroke="#555" /></svg>
            <span className="w-[153px]">Non-Mart Model</span>
            <span className="w-[95px]">SQL Server 2016/2017</span>
            <span className="w-[25px]">66%</span>
            <label className="flex items-center gap-0.5 text-[#444]">
                -
                <span className="relative flex h-2 w-[41px] items-center">
                    <span className="h-px w-full bg-[#777]" />
                    <input type="range" aria-label="Zoom" min="10" max="180" defaultValue="80" className="absolute inset-0 w-full appearance-none bg-transparent [&::-webkit-slider-thumb]:h-2 [&::-webkit-slider-thumb]:w-0.5 [&::-webkit-slider-thumb]:appearance-none [&::-webkit-slider-thumb]:bg-[#333]" />
                </span>
                +
            </label>
        </footer>
    );
}

export default function App() {
    return (
        <div className="min-h-screen bg-white pt-[42px] pl-[21px] font-['Roboto','Open_Sans',sans-serif]">
            <h1 className="pl-9 font-['Liberation_Sans',Arial,sans-serif] text-[37px] leading-[44px] font-bold text-[#262262]">Navigator Edition</h1>
            <div className="mt-[44px] grid grid-cols-[810fr_449fr]">
                <div className="min-w-0 overflow-hidden bg-[#f0f0f0]">
                    <TitleBar />
                    <Ribbon />
                    <Toolbar />
                    <div className="grid grid-cols-[134px_minmax(0,1fr)_134px] gap-[3px] px-[3px] pt-[5px]">
                        <ModelExplorer />
                        <Workspace />
                        <Properties />
                    </div>
                    <div className="grid grid-cols-3 gap-[3px] px-[3px] pt-0.5 pb-1">
                        <ActionLog />
                        <Advisories />
                        <Overview />
                    </div>
                    <StatusBar />
                </div>
            </div>
        </div>
    );
}
